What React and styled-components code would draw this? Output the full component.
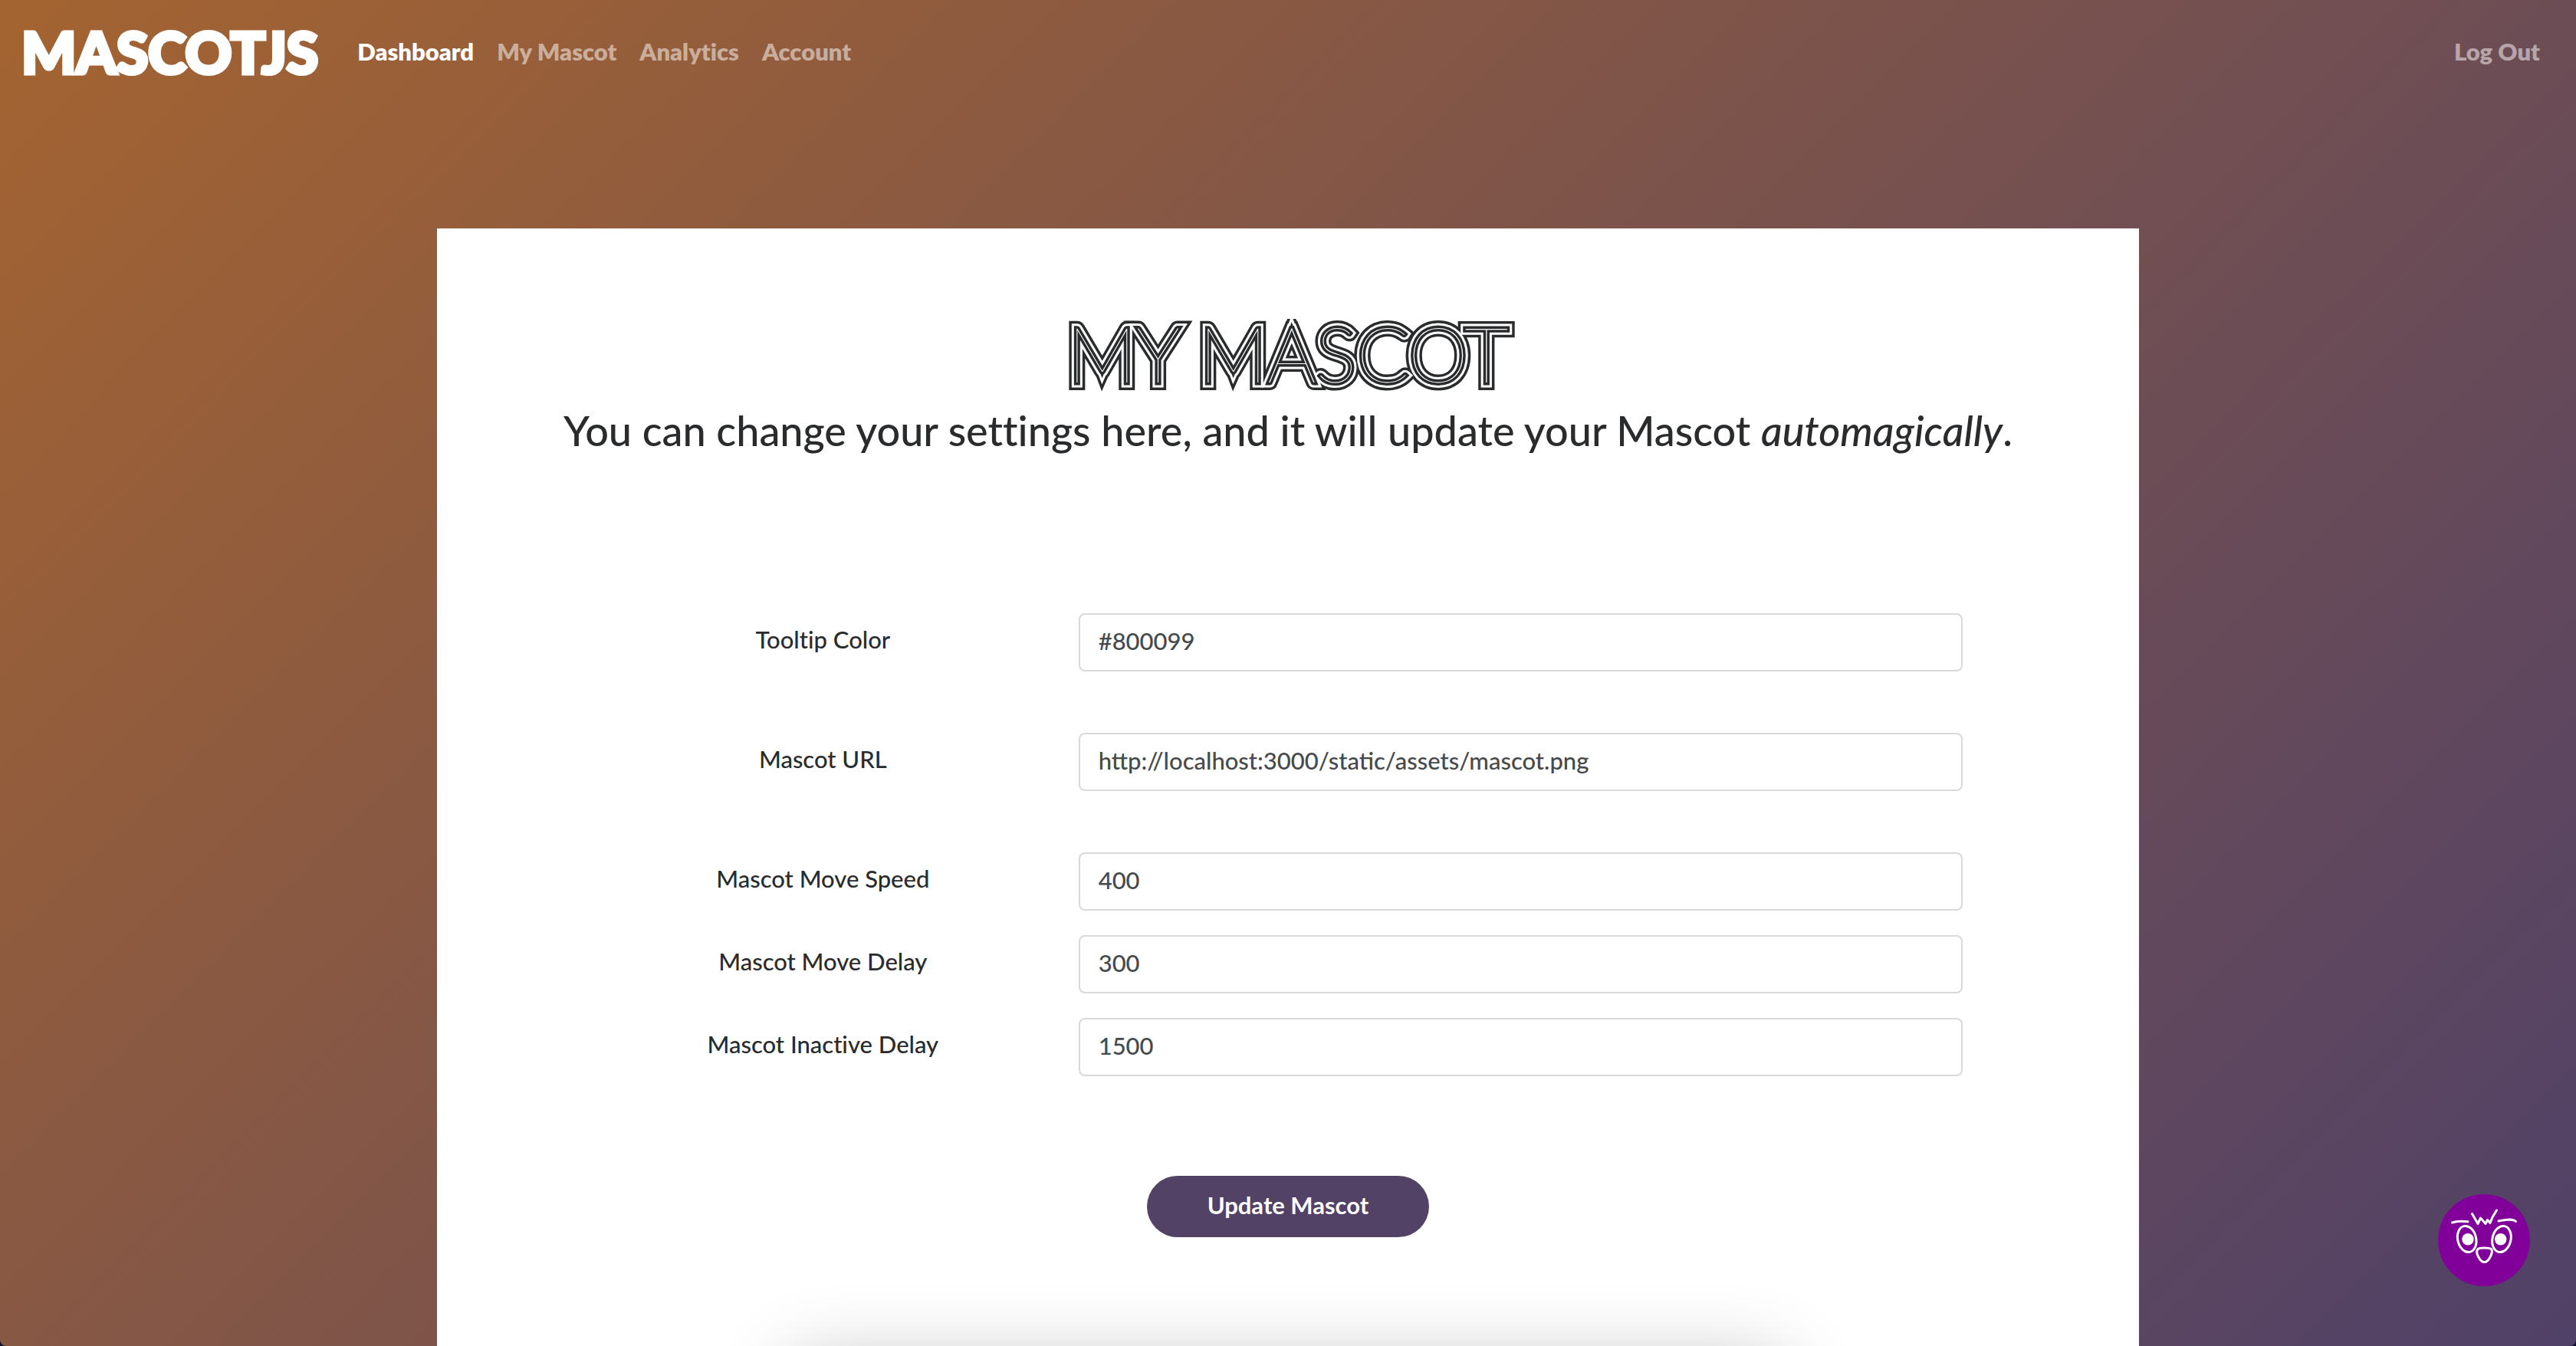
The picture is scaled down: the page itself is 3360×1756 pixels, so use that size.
import React, { useState } from "react";
import styled, { createGlobalStyle } from "styled-components";

const ink = "#292b2c";
const plum = "#524366";

const GlobalStyle = createGlobalStyle`
  *, *::before, *::after { box-sizing: border-box; }
  html { background: #0b1230; }
  body {
    margin: 0;
    font-family: Lato, "Liberation Sans", sans-serif;
    font-variant-ligatures: none;
    color: ${ink};
  }
`;

const Page = styled.div`
  height: 100vh;
  overflow: hidden;
  border-radius: 0 0 8px 8px;
  background: linear-gradient(135deg, #a46431, #504168);
`;

const Navbar = styled.nav`
  display: flex;
  align-items: center;
  gap: 36px;
  padding: 22px 32px 22px 28px;
`;

const Brand = styled.a`
  color: #fff;
  font-size: 75px;
  font-weight: 900;
  line-height: 90px;
  text-decoration: none;
  -webkit-text-stroke: 5px #fff;
`;

const NavList = styled.ul`
  display: flex;
  flex: 1;
  margin: 0;
  padding: 0;
  list-style: none;
`;

const NavItem = styled.li`
  &:last-child { margin-left: auto; }
`;

const NavLink = styled.a`
  display: block;
  padding: 0 15px;
  font-size: 31px;
  font-weight: 800;
  line-height: 40px;
  text-decoration: none;
  color: ${(p) => (p.$active ? "#fff" : "rgba(255, 255, 255, 0.5)")};
`;

const Card = styled.main`
  width: 2220px;
  max-width: 100%;
  margin: 164px auto 0;
  padding: 102px 200px 160px;
  background: #fff;
  text-align: center;
`;

const Title = styled.h1`
  position: relative;
  width: fit-content;
  margin: 0 auto;
  font-size: 100px;
  font-weight: 100;
  line-height: 120px;
  white-space: nowrap;
  clip-path: inset(16px -20px 8px);
  -webkit-text-stroke: 20px ${ink};

  &::before,
  &::after {
    content: attr(data-label);
    position: absolute;
    inset: 0;
  }
  &::before {
    color: #fff;
    -webkit-text-stroke: 13px #fff;
  }
  &::after {
    color: #fff;
    paint-order: stroke fill;
    -webkit-text-stroke: 7px ${ink};
  }
`;

const Lead = styled.h2`
  margin: 8px -100px 0;
  font-size: 54px;
  font-weight: 500;
  line-height: 68px;
`;

const Form = styled.form`
  display: flex;
  flex-direction: column;
  margin-top: 204px;
`;

const Field = styled.div`
  display: grid;
  grid-template-columns: 1fr 2fr;
  margin-bottom: ${(p) => (p.$spaced ? "80px" : "32px")};
  &:last-of-type { margin-bottom: 0; }
`;

const Label = styled.label`
  font-size: 31px;
  font-weight: 500;
  line-height: 68px;
`;

const TextInput = styled.input`
  height: 76px;
  margin: 0 30px;
  padding: 0 24px 4px;
  border: 2px solid #d9d9d9;
  border-radius: 8px;
  background: #fff;
  color: #464a4c;
  font-family: inherit;
  font-size: 31px;
  font-weight: 500;
`;

const SubmitButton = styled.button`
  align-self: center;
  height: 80px;
  margin-top: 130px;
  padding: 0 79px 4px;
  border: 0;
  border-radius: 40px;
  background: ${plum};
  color: #fff;
  font-family: inherit;
  font-size: 31px;
  font-weight: 700;
`;

const Preview = styled.section`
  width: 1300px;
  max-width: 100%;
  height: 600px;
  margin: 160px auto 0;
  background: #fff;
  box-shadow: 0 0 90px rgba(0, 0, 0, 0.23);
`;

const MascotButton = styled.button`
  position: fixed;
  right: 60px;
  bottom: 78px;
  width: 120px;
  height: 120px;
  padding: 0;
  border: 0;
  border-radius: 50%;
  background: #800099;
`;

const links = ["Dashboard", "My Mascot", "Analytics", "Account", "Log Out"];

const fields = [
  { id: "color", label: "Tooltip Color", value: "#800099", spaced: true },
  { id: "url", label: "Mascot URL", value: "http://localhost:3000/static/assets/mascot.png", spaced: true },
  { id: "speed", label: "Mascot Move Speed", value: "400" },
  { id: "delay", label: "Mascot Move Delay", value: "300" },
  { id: "inactive", label: "Mascot Inactive Delay", value: "1500" },
];

function MascotFace() {
  return (
    <svg width="120" height="120" viewBox="0 0 120 120" fill="none" stroke="#fff" strokeWidth="3" strokeLinecap="round" strokeLinejoin="round" aria-hidden="true">
      <path d="M18.5 37C24 35 31 34.800 39 35.800" />
      <path d="M79 35C87 33.500 97 31 101.500 35.500" />
      <path d="M44.500 25.500L52 38.500L55.500 31L62 38.500L64.500 33.500L68 37.500L71 30L76.500 21" />
      <ellipse cx="37.700" cy="58.500" rx="12" ry="17.300" transform="rotate(-13 37.700 58.500)" />
      <ellipse cx="83" cy="58.500" rx="12" ry="17.300" transform="rotate(13 83 58.500)" />
      <circle cx="39" cy="58.700" r="7.700" fill="#fff" stroke="none" />
      <circle cx="81.700" cy="58.700" r="7.700" fill="#fff" stroke="none" />
      <path d="M52 71.500C55 69.500 66 69.500 69.500 71.500C72.500 76 66 88.500 60.500 88.500C55 88.500 48 76 52 71.500Z" />
    </svg>
  );
}

export default function App() {
  const [settings, setSettings] = useState(
    Object.fromEntries(fields.map((f) => [f.id, f.value]))
  );

  return (
    <Page>
      <GlobalStyle />
      <Navbar>
        <Brand href="#">MASCOTJS</Brand>
        <NavList>
          {links.map((name, i) => (
            <NavItem key={name}>
              <NavLink href="#" $active={i === 0}>{name}</NavLink>
            </NavItem>
          ))}
        </NavList>
      </Navbar>
      <Card>
        <Title data-label="MY MASCOT">MY MASCOT</Title>
        <Lead>
          You can change your settings here, and it will update your Mascot <em>automagically</em>.
        </Lead>
        <Form onSubmit={(e) => e.preventDefault()}>
          {fields.map((f) => (
            <Field key={f.id} $spaced={f.spaced}>
              <Label htmlFor={f.id}>{f.label}</Label>
              <TextInput
                id={f.id}
                type="text"
                value={settings[f.id]}
                onChange={(e) => setSettings({ ...settings, [f.id]: e.target.value })}
              />
            </Field>
          ))}
          <SubmitButton type="submit">Update Mascot</SubmitButton>
        </Form>
        <Preview />
      </Card>
      <MascotButton type="button" aria-label="Mascot">
        <MascotFace />
      </MascotButton>
    </Page>
  );
}
